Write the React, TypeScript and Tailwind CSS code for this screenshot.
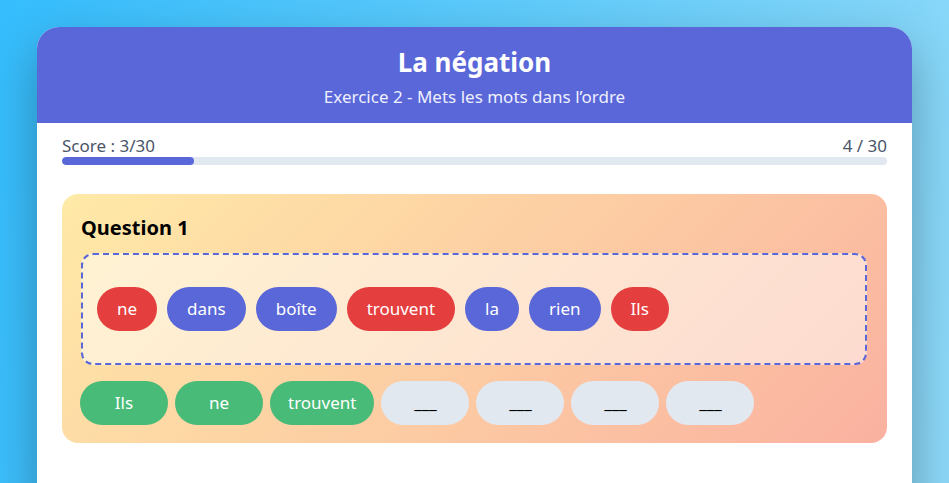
import React from "react";

const font = { fontFamily: '"Noto Sans", "Open Sans", sans-serif' };

const pool = [
  { t: "ne", c: "bg-[#e53e3e]" },
  { t: "dans", c: "bg-[#5a67d8]" },
  { t: "boîte", c: "bg-[#5a67d8]" },
  { t: "trouvent", c: "bg-[#e53e3e]" },
  { t: "la", c: "bg-[#5a67d8]" },
  { t: "rien", c: "bg-[#5a67d8]" },
  { t: "Ils", c: "bg-[#e53e3e]" },
];

const answer = ["Ils", "ne", "trouvent", "___", "___", "___", "___"];

export default function App() {
  return (
    <div
      className="min-h-[483px] w-full bg-[linear-gradient(100deg,#35bdfd_0%,#5fcbfb_50%,#8fd9f8_100%)] px-[37px] pt-[27px] overflow-hidden"
      style={font}
    >
      <div className="w-[875px] h-[520px] bg-white rounded-t-[22px] overflow-hidden shadow-[0_20px_50px_rgba(0,0,0,0.3)]">
        <div className="h-[96px] bg-[#5a67d8] text-white flex flex-col items-center pt-[17px]">
          <div className="text-[26px] font-bold leading-[36px]">La négation</div>
          <div className="text-[17px] leading-[22px] mt-[6px] text-[#eef0ff]">
            Exercice 2 - Mets les mots dans l’ordre
          </div>
        </div>
        <div className="px-[25px] pt-[12px]">
          <div className="flex justify-between text-[17px] leading-[22px] text-[#4a5568]">
            <span>Score : 3/30</span>
            <span>4 / 30</span>
          </div>
          <div className="h-[8px] rounded-full bg-[#e2e8f0] overflow-hidden">
            <div className="h-full w-[16%] bg-[#5a67d8] rounded-full" />
          </div>
          <div className="mt-[29px] rounded-[16px] bg-[linear-gradient(135deg,#ffeaa7,#fab1a0)] pl-[19px] pr-[20px] pt-[20px] pb-[18px]">
            <div className="text-[20px] font-bold leading-[28px] text-black">Question 1</div>
            <div className="mt-[11px] h-[112px] border-2 border-dashed border-[#5a67d8] rounded-[12px] bg-white/50 flex items-center gap-[10px] px-[14px]">
              {pool.map((w, i) => (
                <div
                  key={i}
                  className={`${w.c} text-white h-[44px] rounded-full px-[20px] flex items-center text-[17px]`}
                >
                  {w.t}
                </div>
              ))}
            </div>
            <div className="mt-[16px] ml-[-1px] flex gap-[7px]">
              {answer.map((w, i) => (
                <div
                  key={i}
                  className={`${
                    w === "___" ? "bg-[#e2e8f0] text-black" : "bg-[#48bb78] text-white"
                  } h-[44px] min-w-[88px] rounded-full px-[18px] flex items-center justify-center text-[17px]`}
                >
                  {w}
                </div>
              ))}
            </div>
          </div>
        </div>
      </div>
    </div>
  );
}
